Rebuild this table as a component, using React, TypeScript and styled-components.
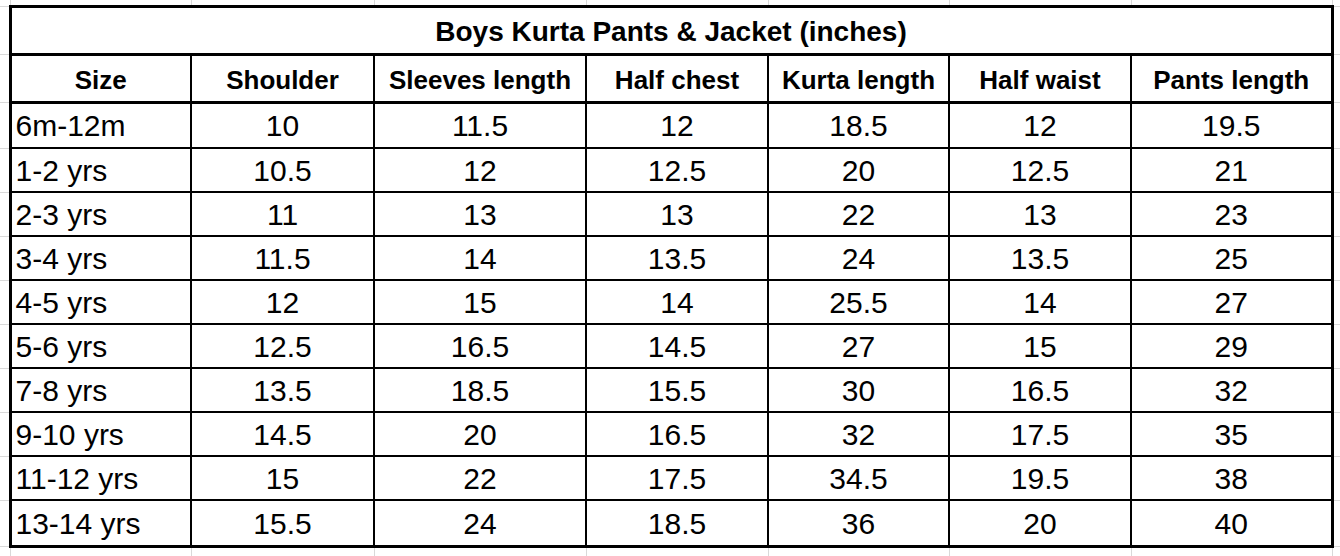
import React from 'react';
import styled, { createGlobalStyle } from 'styled-components';

const GlobalStyle = createGlobalStyle`
	html, body {
		margin: 0;
		background: #ffffff;
		overflow: hidden;
	}
`;

const GRID = '#d9d9d9';

// column widths, measured from border centre to border centre
const COLUMNS = [10, 181, 183, 212, 182, 181, 182, 201, 40];

const HEADERS = ['Size', 'Shoulder', 'Sleeves length', 'Half chest', 'Kurta length', 'Half waist', 'Pants length'];

const ROWS: string[][] = [
	['6m-12m', '10', '11.5', '12', '18.5', '12', '19.5'],
	['1-2 yrs', '10.5', '12', '12.5', '20', '12.5', '21'],
	['2-3 yrs', '11', '13', '13', '22', '13', '23'],
	['3-4 yrs', '11.5', '14', '13.5', '24', '13.5', '25'],
	['4-5 yrs', '12', '15', '14', '25.5', '14', '27'],
	['5-6 yrs', '12.5', '16.5', '14.5', '27', '15', '29'],
	['7-8 yrs', '13.5', '18.5', '15.5', '30', '16.5', '32'],
	['9-10 yrs', '14.5', '20', '16.5', '32', '17.5', '35'],
	['11-12 yrs', '15', '22', '17.5', '34.5', '19.5', '38'],
	['13-14 yrs', '15.5', '24', '18.5', '36', '20', '40'],
];

const Sheet = styled.table`
	border-collapse: collapse;
	table-layout: fixed;
	width: ${COLUMNS.reduce((a, b) => a + b, 0)}px;
	font-family: "Liberation Sans", Arial, sans-serif;
	color: #000000;
`;

const Row = styled.tr<{ $h: number }>`
	height: ${p => p.$h}px;
`;

const Edge = styled.td`
	padding: 0;
	border: 1px solid ${GRID};
	border-left: none;
	border-right: none;
`;

const Gap = styled.td<{ $first?: boolean }>`
	padding: 0;
	border-left: ${p => (p.$first ? 'none' : `1px solid ${GRID}`)};
	border-right: 1px solid ${GRID};
`;

const TitleCell = styled.td`
	border: 3px solid #000000;
	padding: 4px 0 0;
	vertical-align: middle;
	text-align: center;
	font-size: 28px;
	font-weight: 700;
	white-space: nowrap;
`;

const HeadCell = styled.th<{ $first?: boolean; $last?: boolean }>`
	border: 2px solid #000000;
	border-top-width: 3px;
	border-bottom-width: 3px;
	border-left-width: ${p => (p.$first ? 3 : 2)}px;
	border-right-width: ${p => (p.$last ? 3 : 2)}px;
	padding: 5px 0 0;
	vertical-align: middle;
	text-align: center;
	font-size: 26px;
	font-weight: 700;
	white-space: nowrap;
`;

const Cell = styled.td<{ $first?: boolean; $last?: boolean; $bottom?: boolean }>`
	border: 2px solid #000000;
	border-left-width: ${p => (p.$first ? 3 : 2)}px;
	border-right-width: ${p => (p.$last ? 3 : 2)}px;
	border-bottom-width: ${p => (p.$bottom ? 3 : 2)}px;
	padding: 2px 4px 0;
	vertical-align: middle;
	text-align: ${p => (p.$first ? 'left' : 'center')};
	font-size: 30px;
	font-weight: 400;
	white-space: nowrap;
`;

const rowHeight = (i: number) => (i === 0 || i === ROWS.length - 1 ? 46 : 44);

const App: React.FC = () => {
	return (
		<>
			<GlobalStyle />
			<Sheet>
				<colgroup>
					{COLUMNS.map((w, i) => <col key={i} style={{ width: w }} />)}
				</colgroup>
				<tbody>
					<Row $h={6}>
						{COLUMNS.map((_, i) => <Gap key={i} $first={i === 0} />)}
					</Row>
					<Row $h={48}>
						<Edge />
						<TitleCell colSpan={7}>Boys Kurta Pants &amp; Jacket (inches)</TitleCell>
						<Edge />
					</Row>
					<Row $h={48}>
						<Edge />
						{HEADERS.map((h, i) => (
							<HeadCell key={h} $first={i === 0} $last={i === HEADERS.length - 1}>{h}</HeadCell>
						))}
						<Edge />
					</Row>
					{ROWS.map((r, ri) => (
						<Row key={r[0]} $h={rowHeight(ri)}>
							<Edge />
							{r.map((v, ci) => (
								<Cell
									key={ci}
									$first={ci === 0}
									$last={ci === r.length - 1}
									$bottom={ri === ROWS.length - 1}
								>
									{v}
								</Cell>
							))}
							<Edge />
						</Row>
					))}
					<Row $h={30}>
						{COLUMNS.map((_, i) => <Gap key={i} $first={i === 0} />)}
					</Row>
				</tbody>
			</Sheet>
		</>
	);
};

export default App;
